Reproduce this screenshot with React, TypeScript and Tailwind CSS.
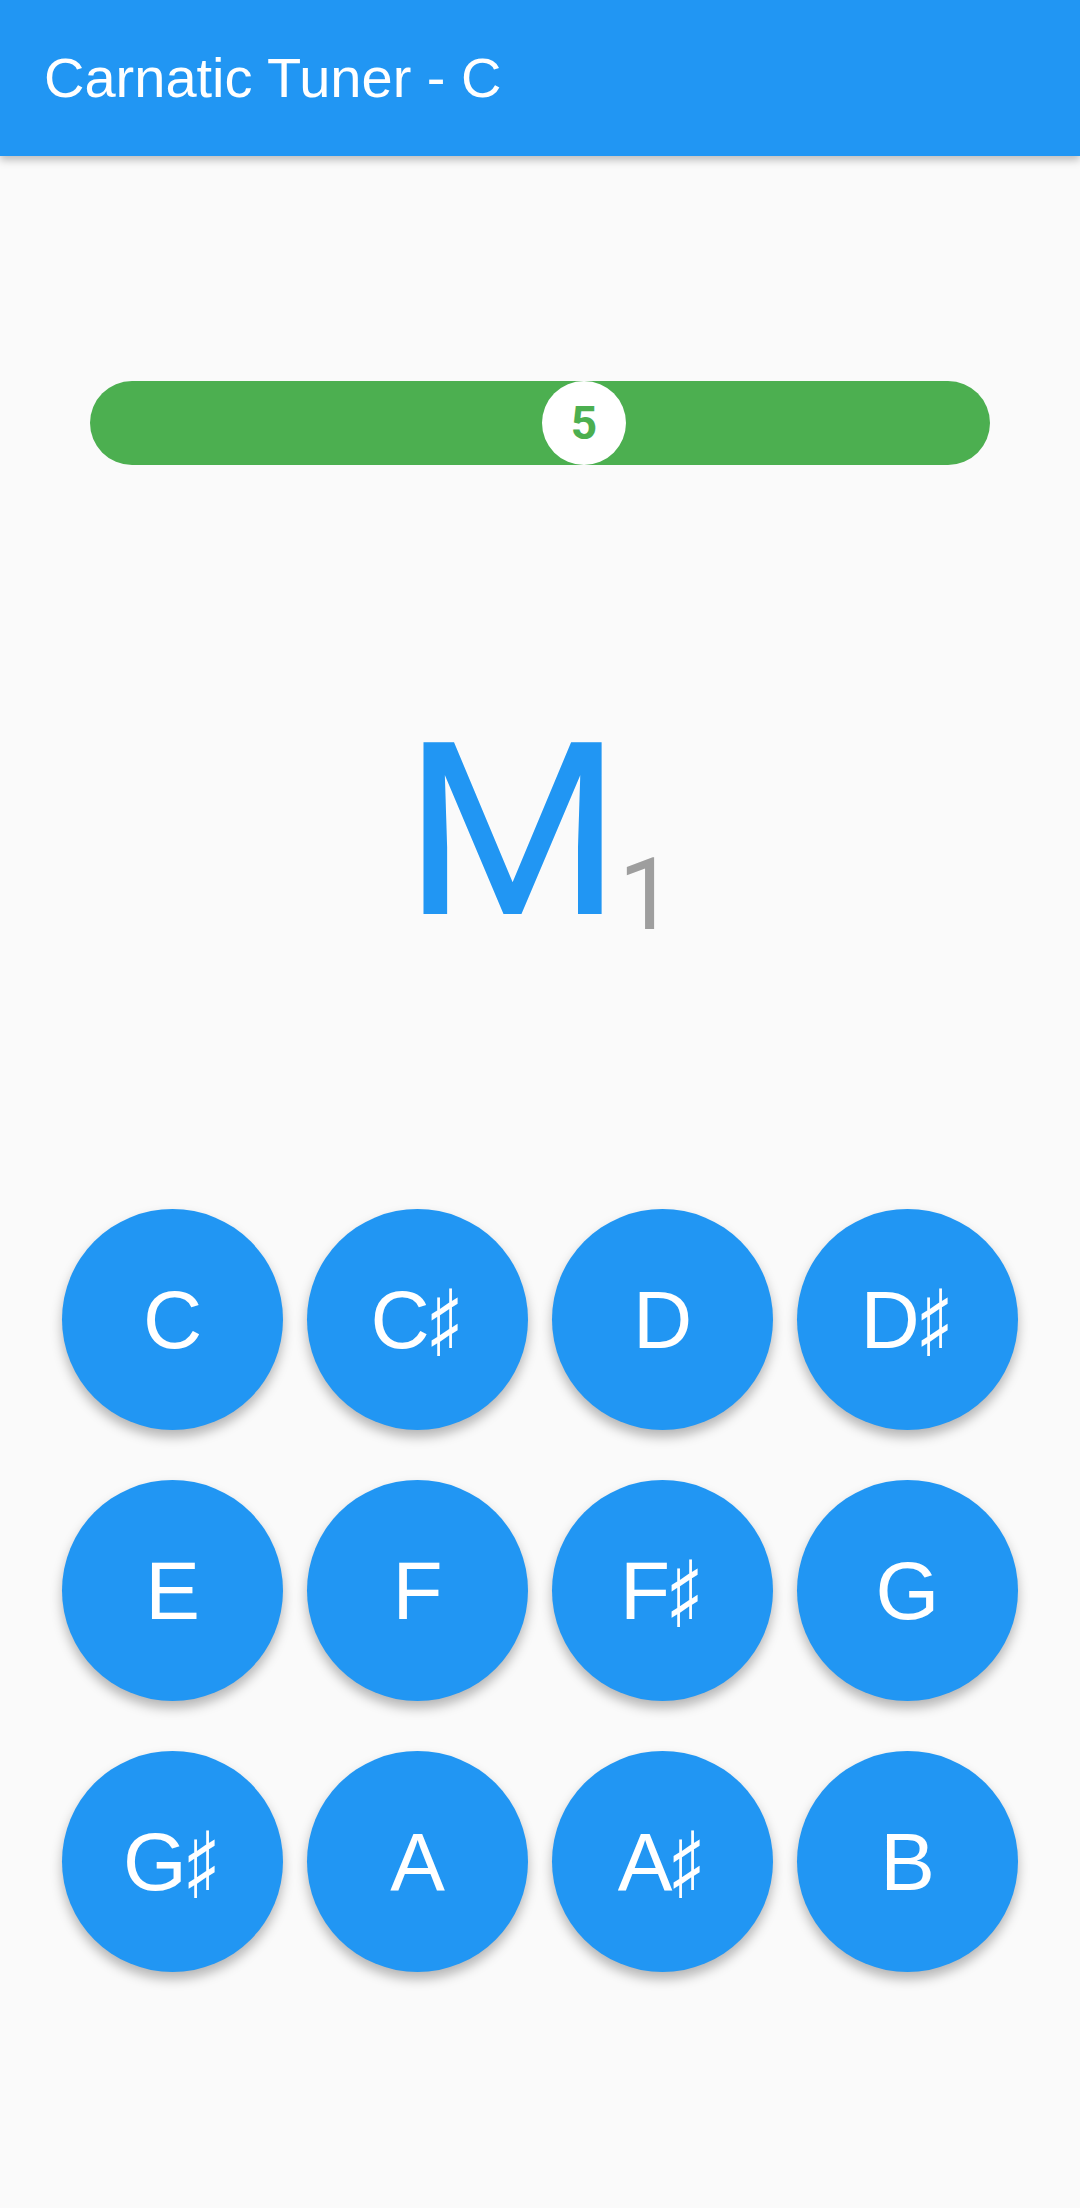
const NOTES = ['C', 'C♯', 'D', 'D♯', 'E', 'F', 'F♯', 'G', 'G♯', 'A', 'A♯', 'B'];

export default function App() {
  return (
    <main className="min-h-screen w-[1080px] h-[2208px] bg-[#fafafa] overflow-hidden">

      {/* APP BAR */}
      <header className="h-[156px] bg-[#2196f3] flex items-center pl-[44px] shadow-[0_4px_8px_rgba(0,0,0,0.25)] relative z-10">
        <h1 className="text-white text-[56px] leading-[56px] font-['Liberation_Sans',Arial,sans-serif]">
          Carnatic Tuner - C
        </h1>
      </header>

      {/* PITCH SLIDER */}
      <section className="mt-[225px] px-[90px]">
        <div className="relative h-[84px] w-[900px] rounded-full bg-[#4caf50]">
          <div className="absolute top-0 left-[452px] w-[84px] h-[84px] rounded-full bg-white flex items-center justify-center">
            <span className="text-[#4caf50] text-[46px] leading-none font-bold font-['Roboto',sans-serif]">
              5
            </span>
          </div>
        </div>
      </section>

      {/* CURRENT SWARA */}
      <section className="mt-[245px] pl-[2px] flex items-baseline justify-center font-['Roboto',sans-serif]">
        <span className="text-[#2196f3] text-[242px] leading-none scale-x-[1.04]">M</span>
        <span className="text-[#9e9e9e] text-[100px] leading-none translate-y-[15px]">1</span>
      </section>

      {/* NOTE BUTTONS */}
      <section className="mt-[257px] px-[62px] grid grid-cols-4 gap-x-[24px] gap-y-[50px]">
        {NOTES.map((n) => (
          <button
            key={n}
            className="w-[221px] h-[221px] rounded-full bg-[#2196f3] text-white text-[82px] leading-none font-['Liberation_Sans',Arial,'DejaVu_Sans',sans-serif] flex items-center justify-center shadow-[0_7px_12px_rgba(0,0,0,0.28)]"
          >
            {n[0]}
            {n[1] && <span className="inline-block scale-x-[0.7] -ml-[6px]">{n[1]}</span>}
          </button>
        ))}
      </section>
    </main>
  );
}
